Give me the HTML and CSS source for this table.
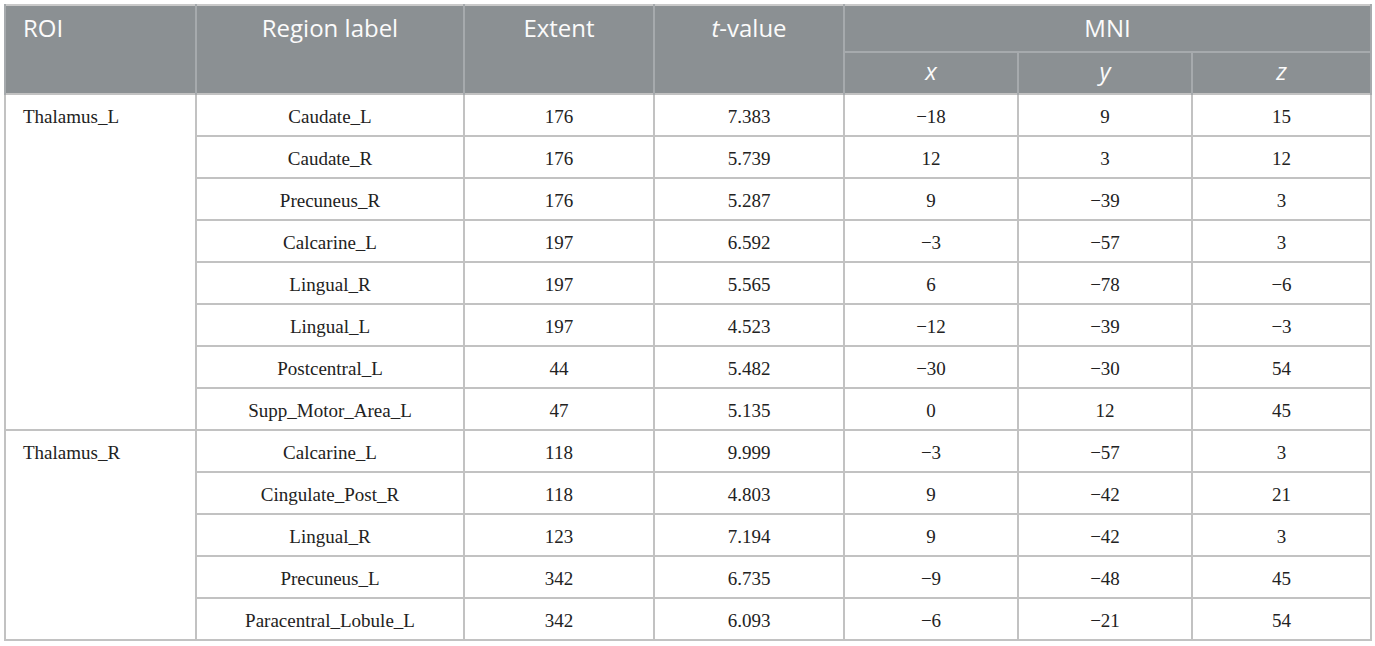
FILE: index.html
```html
<!DOCTYPE html>
<html>
<head>
<meta charset="utf-8">
<link rel="stylesheet" href="styles.css">
</head>
<body>
<div class="wrap">
<table class="tbl">
<colgroup>
<col class="c-roi"><col class="c-reg"><col class="c-ext"><col class="c-t"><col class="c-x"><col class="c-y"><col class="c-z">
</colgroup>
<thead>
<tr class="h1">
<th rowspan="2" class="left">ROI</th>
<th rowspan="2">Region label</th>
<th rowspan="2">Extent</th>
<th rowspan="2"><i>t</i>-value</th>
<th colspan="3" class="mni">MNI</th>
</tr>
<tr class="h2">
<th><i>x</i></th><th><i>y</i></th><th><i>z</i></th>
</tr>
</thead>
<tbody>
<tr><td rowspan="8" class="roi">Thalamus_L</td><td>Caudate_L</td><td>176</td><td>7.383</td><td>−18</td><td>9</td><td>15</td></tr>
<tr><td>Caudate_R</td><td>176</td><td>5.739</td><td>12</td><td>3</td><td>12</td></tr>
<tr><td>Precuneus_R</td><td>176</td><td>5.287</td><td>9</td><td>−39</td><td>3</td></tr>
<tr><td>Calcarine_L</td><td>197</td><td>6.592</td><td>−3</td><td>−57</td><td>3</td></tr>
<tr><td>Lingual_R</td><td>197</td><td>5.565</td><td>6</td><td>−78</td><td>−6</td></tr>
<tr><td>Lingual_L</td><td>197</td><td>4.523</td><td>−12</td><td>−39</td><td>−3</td></tr>
<tr><td>Postcentral_L</td><td>44</td><td>5.482</td><td>−30</td><td>−30</td><td>54</td></tr>
<tr><td>Supp_Motor_Area_L</td><td>47</td><td>5.135</td><td>0</td><td>12</td><td>45</td></tr>
<tr><td rowspan="5" class="roi">Thalamus_R</td><td>Calcarine_L</td><td>118</td><td>9.999</td><td>−3</td><td>−57</td><td>3</td></tr>
<tr><td>Cingulate_Post_R</td><td>118</td><td>4.803</td><td>9</td><td>−42</td><td>21</td></tr>
<tr><td>Lingual_R</td><td>123</td><td>7.194</td><td>9</td><td>−42</td><td>3</td></tr>
<tr><td>Precuneus_L</td><td>342</td><td>6.735</td><td>−9</td><td>−48</td><td>45</td></tr>
<tr><td>Paracentral_Lobule_L</td><td>342</td><td>6.093</td><td>−6</td><td>−21</td><td>54</td></tr>
</tbody>
</table>
</div>
</body>
</html>
```

FILE: styles.css
```css
html, body {
  margin: 0;
  padding: 0;
  background: #ffffff;
}
.wrap {
  padding: 4px 0 0 4px;
}
.tbl {
  border-collapse: collapse;
  table-layout: fixed;
  width: 1366px;
  border: 2px solid #c9c9c9;
}
.c-roi { width: 191px; }
.c-reg { width: 268px; }
.c-ext { width: 190px; }
.c-t { width: 190px; }
.c-x { width: 174px; }
.c-y { width: 174px; }
.c-z { width: 179px; }

thead th {
  background: #8b9093;
  color: #fbfbfb;
  font-family: "Open Sans", "Noto Sans", sans-serif;
  font-weight: 400;
  font-size: 24px;
  text-align: center;
  vertical-align: top;
  padding: 6px 8px 0 8px;
  border-left: 2px solid #a6aaad;
  border-right: 2px solid #a6aaad;
  line-height: 32px;
}
thead th.left {
  text-align: left;
  padding-left: 17px;
}
thead tr.h1 th {
  height: 39px;
}
thead tr.h1 th.mni {
  border-bottom: 2px solid #a6aaad;
}
thead tr.h2 th {
  height: 38px;
  padding-top: 2px;
  padding-bottom: 0;
}
tbody td {
  font-family: "Liberation Serif", "Times New Roman", serif;
  font-size: 19px;
  color: #222222;
  text-align: center;
  vertical-align: middle;
  height: 36px;
  padding: 4px 8px 0 8px;
  border: 2px solid #c2c2c2;
}
tbody td.roi {
  text-align: left;
  vertical-align: top;
  padding-left: 17px;
  padding-top: 11px;
  line-height: 22px;
}
```
